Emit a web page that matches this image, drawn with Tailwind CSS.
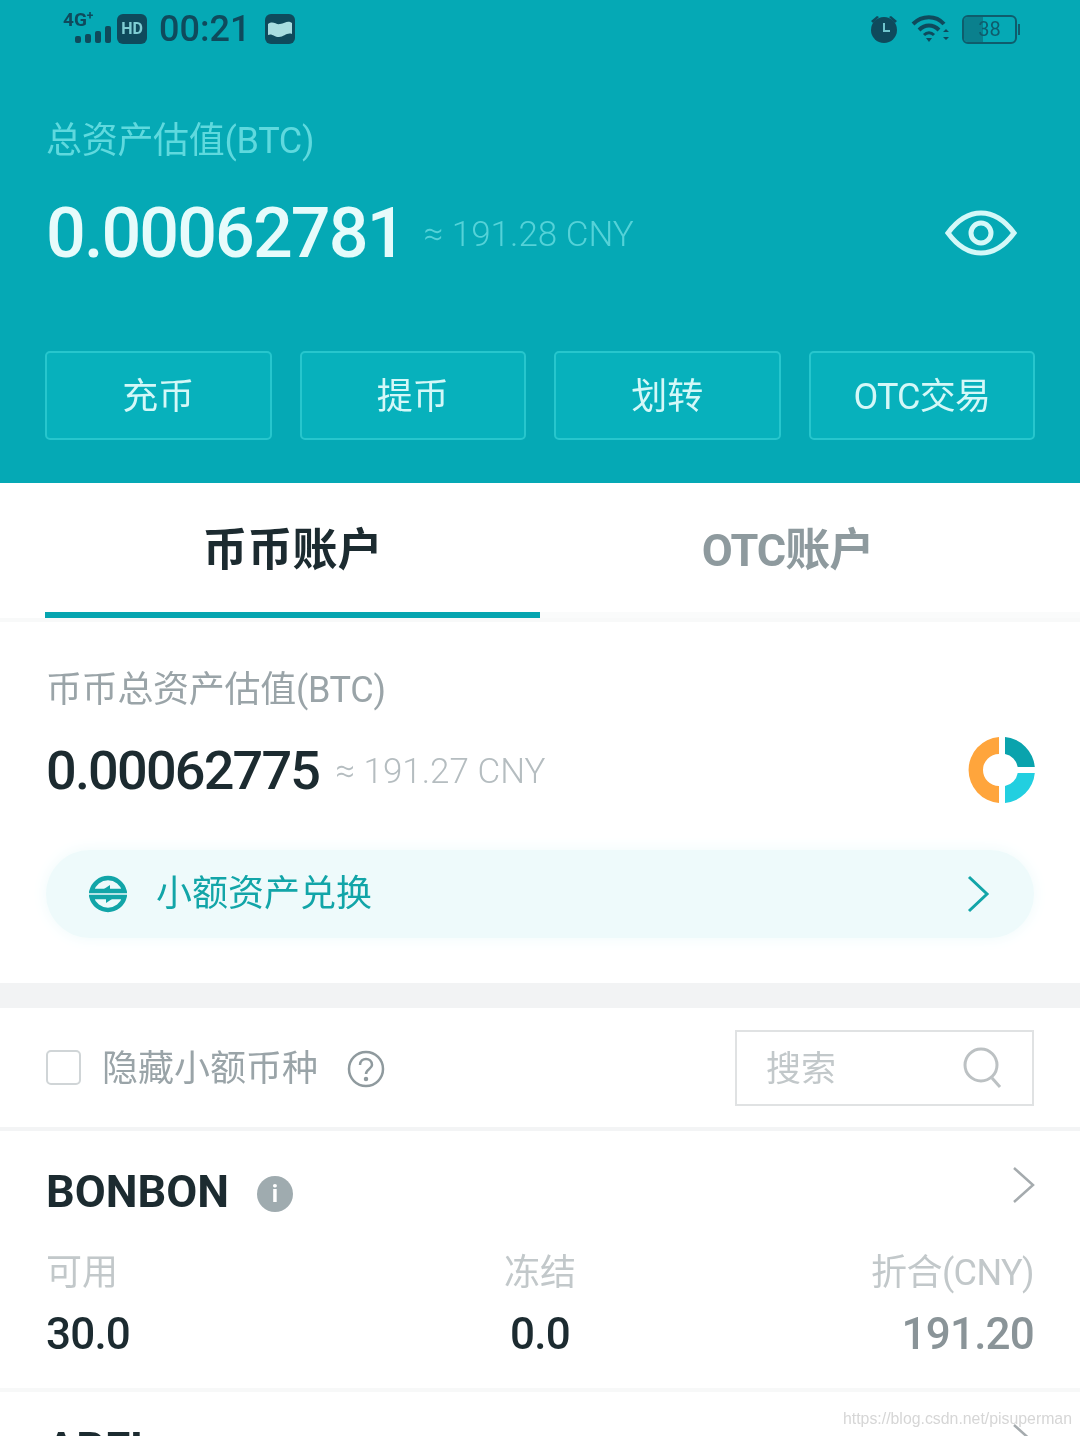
<!DOCTYPE html>
<html lang="zh-CN">
<head>
  <meta charset="UTF-8"/>
  <meta name="viewport" content="width=device-width,initial-scale=1"/>
  <title>资产</title>
  <script src="https://cdn.jsdelivr.net/npm/@tailwindcss/browser@4"></script>
</head>
<body class="bg-white">
<div class="relative w-[1080px] h-[1436px] overflow-hidden bg-white font-['Roboto','Noto_Sans_CJK_SC',sans-serif] blur-[0.5px]">

  <!-- header -->
  <header class="h-[483px] bg-[#05a9b5]">
    <!-- status bar -->
    <div class="h-[58px] flex items-center justify-between pl-[63px] pr-[60px] text-[#0f4a5c]">
      <div class="flex items-center">
        <div class="relative w-[48px] h-[34px] mt-[-2px]">
          <span class="absolute left-0 top-[-1px] text-[19px] leading-[20px] font-bold">4G<sup class="text-[12px]">+</sup></span>
          <svg class="absolute left-[12px] top-[14px]" width="36" height="18" viewBox="0 0 36 18" fill="#0f4a5c">
            <rect x="0" y="11" width="6" height="7" rx="2"/><rect x="10" y="9" width="6" height="9" rx="2"/><rect x="20" y="6" width="6" height="12" rx="2"/><rect x="30" y="1" width="6" height="17" rx="2"/>
          </svg>
        </div>
        <div class="ml-[6px] w-[30px] h-[30px] rounded-[6px] bg-[#0f4a5c] flex items-center justify-center text-[16px] leading-none font-bold text-[#7fcdd3]">HD</div>
        <span class="ml-[12px] text-[36px] leading-none font-medium">00:21</span>
        <svg class="ml-[15px]" width="30" height="30" viewBox="0 0 30 30">
          <rect width="30" height="30" rx="6" fill="#0f4a5c"/>
          <path d="M3 10 C8 6 11 11 15 10 C20 9 23 6 27 9 V20 C22 18 19 23 14 23 C9 23 7 19 3 21 Z" fill="#a8dde0"/>
        </svg>
      </div>
      <div class="flex items-center">
        <svg width="30" height="30" viewBox="0 0 30 30" fill="#0f4a5c">
          <path d="M2 7 L8 2 L10 3 L4 9 Z M28 7 L22 2 L20 3 L26 9 Z"/>
          <circle cx="15" cy="16" r="13"/>
          <path d="M14 9 H16 V16 H21 V18 H14 Z" fill="#6fc5cc"/>
        </svg>
        <svg class="ml-[12px]" width="40" height="30" viewBox="0 0 40 30" fill="none" stroke="#0f4a5c">
          <path d="M2 10 C11 1 25 1 33 10" stroke-width="4"/>
          <path d="M8 16 C14 10 22 10 28 16" stroke-width="4"/>
          <path d="M13 21 C16 18 20 18 23 21" stroke-width="3"/>
          <path d="M15 24 H21 L18 28 Z" fill="#0f4a5c" stroke="none"/>
          <path d="M32 18 L35 15 L38 18 Z M32 23 H38 L35 26 Z" fill="#0f4a5c" stroke="none"/>
        </svg>
        <div class="ml-[11px] flex items-center">
          <div class="relative w-[55px] h-[29px] rounded-[6px] border-2 border-[#0f5c6c] overflow-hidden flex items-center justify-center">
            <div class="absolute left-0 top-0 bottom-0 w-[38%] bg-[#0a808d]"></div>
            <span class="relative text-[20px] leading-none text-[#0f5c6c]">38</span>
          </div>
          <div class="ml-[1px] w-[2px] h-[11px] bg-[#0f5c6c]"></div>
        </div>
      </div>
    </div>

    <h2 class="mt-[59px] pl-[46px] h-[48px] flex items-center text-[36px] leading-none tracking-[-0.3px] text-[#5fd9de]">总资产估值(BTC)</h2>

    <div class="mt-[28px] h-[80px] pl-[46px] pr-[63px] flex items-center">
      <span class="text-[70px] leading-none tracking-[-1.9px] text-[#e6fbfb] font-medium">0.00062781</span>
      <span class="ml-[19px] mt-[2px] text-[35px] leading-none font-light text-[#55d2d8]">≈ 191.28 CNY</span>
      <svg class="ml-auto" width="72" height="46" viewBox="0 0 72 46" fill="none" stroke="#d4f8f8" stroke-width="5">
        <path d="M3 23 C14 8 25 3 36 3 C47 3 58 8 69 23 C58 38 47 43 36 43 C25 43 14 38 3 23 Z"/>
        <circle cx="36" cy="23" r="10"/>
      </svg>
    </div>

    <div class="mt-[78px] mx-[45px] grid grid-cols-4 gap-[28px] text-[#d4f8f8] text-[36px]">
      <button class="h-[89px] pt-[3px] rounded-[5px] border-2 border-[#27c6cd] bg-[#07b1bc]">充币</button>
      <button class="h-[89px] pt-[3px] rounded-[5px] border-2 border-[#27c6cd] bg-[#07b1bc]">提币</button>
      <button class="h-[89px] pt-[3px] rounded-[5px] border-2 border-[#27c6cd] bg-[#07b1bc]">划转</button>
      <button class="h-[89px] pt-[3px] rounded-[5px] border-2 border-[#27c6cd] bg-[#07b1bc] tracking-[-0.8px]">OTC交易</button>
    </div>
  </header>

  <!-- tabs -->
  <nav class="h-[135px] pl-[45px] grid grid-cols-[495px_1fr] text-[45px] font-bold">
    <div class="flex items-center justify-center text-[#1c2b30] border-b-[6px] border-[#06a5b0] pt-[7px]">币币账户</div>
    <div class="flex items-center justify-center pr-[45px] text-[#8e9a9e] tracking-[-1px] border-b-[6px] border-[#fafbfb] pt-[7px]">OTC账户</div>
  </nav>
  <div class="h-[4px] bg-[#f8f9f9]"></div>

  <!-- spot summary -->
  <section class="h-[361px] pt-[44px] px-[46px]">
    <h3 class="h-[48px] flex items-center text-[36px] leading-none tracking-[-0.3px] text-[#9aa4a8]">币币总资产估值(BTC)</h3>
    <div class="mt-[22px] h-[70px] flex items-center">
      <span class="text-[54px] leading-none tracking-[-1.8px] font-medium text-[#1c2b30]">0.00062775</span>
      <span class="ml-[16px] text-[35px] leading-none font-light text-[#b5bdc0]">≈ 191.27 CNY</span>
      <svg class="ml-auto mr-[-2px] mt-[-3px]" width="68" height="68" viewBox="0 0 68 68">
        <path d="M31 1.1 A33 33 0 0 0 31 66.9 L31 50 A16 16 0 0 1 31 18 Z" fill="#ffa53c"/>
        <path d="M37 1.1 A33 33 0 0 1 66.8 31 L49.7 31 A16 16 0 0 0 37 18 Z" fill="#0aa3ad"/>
        <path d="M66.8 37 A33 33 0 0 1 37 66.9 L37 50 A16 16 0 0 0 49.7 37 Z" fill="#22cfe0"/>
      </svg>
    </div>
    <div class="mt-[44px] h-[88px] rounded-full bg-[#eefafb] shadow-[0_0_16px_#eefafb] flex items-center pl-[43px] pr-[44px]">
      <svg width="38" height="38" viewBox="0 0 38 38" fill="#12a5a8" stroke="none">
        <path d="M2.5 16 A17 17 0 0 1 35.5 16 Z" fill="none" stroke="#12a5a8" stroke-width="4.5"/>
        <path d="M2.5 22 A17 17 0 0 0 35.5 22 Z" fill="none" stroke="#12a5a8" stroke-width="4.5"/>
        <path d="M12 16 L21 16 L21 10 Z"/>
        <path d="M26 22 L17 22 L17 28 Z"/>
      </svg>
      <span class="ml-[29px] text-[36px] leading-none text-[#12a5a8]">小额资产兑换</span>
      <svg class="ml-auto" width="24" height="38" viewBox="0 0 24 38" fill="none" stroke="#12a5a8" stroke-width="3">
        <path d="M3 2 L21 19 L3 36"/>
      </svg>
    </div>
  </section>

  <div class="h-[25px] bg-[#f2f3f4]"></div>

  <!-- filter -->
  <div class="h-[119px] px-[46px] flex items-center">
    <div class="w-[35px] h-[35px] rounded-[5px] border-2 border-[#d0d5d7]"></div>
    <span class="ml-[21px] mt-[3px] text-[36px] leading-none text-[#9aa4a8]">隐藏小额币种</span>
    <svg class="ml-[29px] mt-[2px]" width="38" height="38" viewBox="0 0 38 38" fill="none" stroke="#8f9a9e" stroke-width="2.5">
      <circle cx="19" cy="19" r="17"/>
      <path d="M13 15 C13 7 25 7 25 15 C25 19 19 19 19 24"/>
      <circle cx="19" cy="29" r="1" fill="#8f9a9e"/>
    </svg>
    <div class="ml-auto w-[299px] h-[76px] mt-[1px] border-2 border-[#e0e2e3] flex items-center pl-[29px] pr-[29px]">
      <span class="mt-[2px] text-[35px] leading-none text-[#c2c8ca]">搜索</span>
      <svg class="ml-auto" width="40" height="42" viewBox="0 0 40 42" fill="none" stroke="#bcc1c3" stroke-width="3">
        <circle cx="18" cy="18" r="16"/>
        <path d="M29 31 L37 40"/>
      </svg>
    </div>
  </div>
  <div class="h-[4px] bg-[#f3f4f5]"></div>

  <!-- coin rows -->
  <div class="h-[257px] pt-[30px] px-[46px]">
    <div class="h-[60px] flex items-center">
      <span class="text-[45px] leading-none font-bold text-[#1c2b30]">BONBON</span>
      <div class="ml-[28px] mt-[6px] w-[36px] h-[36px] rounded-full bg-[#9fabaf] flex items-center justify-center text-[24px] leading-none font-bold text-white">i</div>
      <svg class="ml-auto mr-[-2px] mt-[-12px]" width="24" height="38" viewBox="0 0 24 38" fill="none" stroke="#a5abae" stroke-width="2.5">
        <path d="M2 2 L21 19 L2 36"/>
      </svg>
    </div>
    <div class="mt-[28px] grid grid-cols-3 text-[36px] leading-[48px] text-[#c2c8ca]">
      <span>可用</span>
      <span class="text-center">冻结</span>
      <span class="text-right tracking-[-0.6px]">折合(CNY)</span>
    </div>
    <div class="mt-[9px] grid grid-cols-3 text-[44px] leading-[56px] tracking-[-0.8px] font-medium">
      <span class="text-[#1c2b30]">30.0</span>
      <span class="text-center text-[#1c2b30]">0.0</span>
      <span class="text-right text-[#8a9498]">191.20</span>
    </div>
  </div>
  <div class="h-[4px] bg-[#f7f8f8]"></div>

  <div class="pt-[26px] px-[46px]">
    <div class="h-[60px] flex items-center">
      <span class="text-[45px] leading-none font-bold text-[#1c2b30]">ABEL</span>
      <svg class="ml-auto mr-[-2px] mt-[-12px]" width="24" height="38" viewBox="0 0 24 38" fill="none" stroke="#a5abae" stroke-width="2.5">
        <path d="M2 2 L21 19 L2 36"/>
      </svg>
    </div>
  </div>

  <!-- watermark -->
  <span class="absolute left-[843px] top-[1409px] text-[15.85px] leading-[20px] font-['Liberation_Sans',sans-serif] text-[#d6d6d6]">https://blog.csdn.net/pisuperman</span>
</div>
</body>
</html>
